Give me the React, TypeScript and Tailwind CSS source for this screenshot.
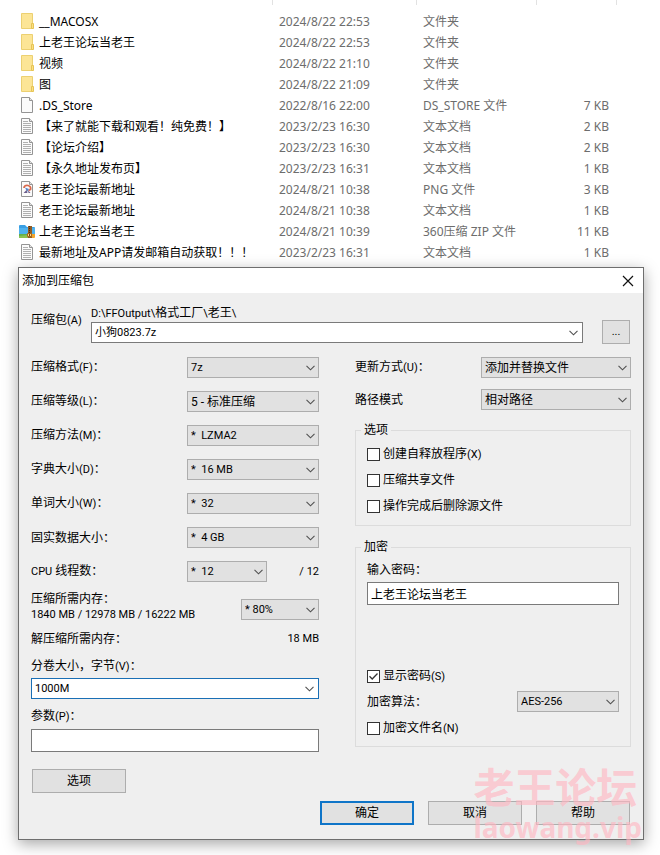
import { useState } from "react";
import type { ReactNode } from "react";
import clsx from "clsx";

type FileKind = "folder" | "blank" | "text" | "image" | "zip";

interface FileEntry {
    kind: FileKind;
    name: string;
    date: string;
    type: string;
    size?: string;
}

const files: FileEntry[] = [
    { kind: "folder", name: "__MACOSX", date: "2024/8/22 22:53", type: "文件夹" },
    { kind: "folder", name: "上老王论坛当老王", date: "2024/8/22 22:53", type: "文件夹" },
    { kind: "folder", name: "视频", date: "2024/8/22 21:10", type: "文件夹" },
    { kind: "folder", name: "图", date: "2024/8/22 21:09", type: "文件夹" },
    { kind: "blank", name: ".DS_Store", date: "2022/8/16 22:00", type: "DS_STORE 文件", size: "7 KB" },
    { kind: "text", name: "【来了就能下载和观看！纯免费！】", date: "2023/2/23 16:30", type: "文本文档", size: "2 KB" },
    { kind: "text", name: "【论坛介绍】", date: "2023/2/23 16:30", type: "文本文档", size: "2 KB" },
    { kind: "text", name: "【永久地址发布页】", date: "2023/2/23 16:31", type: "文本文档", size: "1 KB" },
    { kind: "image", name: "老王论坛最新地址", date: "2024/8/21 10:38", type: "PNG 文件", size: "3 KB" },
    { kind: "text", name: "老王论坛最新地址", date: "2024/8/21 10:38", type: "文本文档", size: "1 KB" },
    { kind: "zip", name: "上老王论坛当老王", date: "2024/8/21 10:39", type: "360压缩 ZIP 文件", size: "11 KB" },
    { kind: "text", name: "最新地址及APP请发邮箱自动获取！！！", date: "2023/2/23 16:31", type: "文本文档", size: "1 KB" },
];

const compression = [
    { id: "format", label: "压缩格式", hotkey: "F", value: "7z" },
    { id: "level", label: "压缩等级", hotkey: "L", value: "5 - 标准压缩", cjk: true },
    { id: "method", label: "压缩方法", hotkey: "M", value: "*\u00a0 LZMA2" },
    { id: "dictionary", label: "字典大小", hotkey: "D", value: "*\u00a0 16 MB" },
    { id: "word", label: "单词大小", hotkey: "W", value: "*\u00a0 32" },
    { id: "solid", label: "固实数据大小", value: "*\u00a0 4 GB" },
];

const FileIcon = ({ kind }: { kind: FileKind }) => {
    if (kind === "folder") {
        return (
            <svg className="h-[18px] w-4 shrink-0" viewBox="0 1 16 18" aria-hidden="true">
                <path d="M2.5 1.5h11v15h-11z" fill="#fce596" stroke="#ecd071" />
                <path d="M12.5 11.5h2v5h-2z" fill="#fbdf83" stroke="#e6c455" />
            </svg>
        );
    }
    if (kind === "zip") {
        return (
            <svg className="h-[18px] w-4 shrink-0" viewBox="0 1 16 18" aria-hidden="true">
                <path d="M0 4q0-1 1-1h5l2 2h7q1 0 1 1v8H0z" fill="#3a9fe3" />
                <path d="M0 6h16v6H0z" fill="#4eb2ef" />
                <path d="M0 12h9v4H1q-1 0-1-1z" fill="#63b04a" />
                <path d="M0 14l9-1v3H1q-1 0-1-1z" fill="#8cc152" />
                <path d="M12 12h4v3q0 1-1 1h-3z" fill="#f0a52e" />
                <path d="M9 4h4v12H9z" fill="#8f5a24" />
                <path d="M10.500 4v7" stroke="#4c2c0e" strokeDasharray="1 1" />
                <path d="M8.500 11.500h4v3h-4z" fill="#fbe08a" stroke="#a8641c" />
                <path d="M10 12h1v2h-1z" fill="#7a3d0c" />
            </svg>
        );
    }
    return (
        <svg className="h-[18px] w-4 shrink-0" viewBox="0 1 16 18" aria-hidden="true">
            <path d="M2.500 1.500h8l3 3v12h-11z" fill="#fbfbfb" stroke="#949494" />
            <path d="M10.500 1.500v3h3" fill="#e4e4e4" stroke="#949494" />
            {kind === "text" && <path d="M4 4.500h5M4 6.500h8M4 8.500h8M4 10.500h8M4 12.500h8M4 14.500h8" stroke="#b0b0b0" />}
            {kind === "image" && (
                <>
                    <path d="M5 8c0-2 2-3 4-2.500s3 2 2.500 4l-2 1" fill="none" stroke="#d8694c" strokeWidth="1.800" />
                    <path d="M6 7.500l4 1.500-2 3z" fill="#5b86c8" />
                    <path d="M4.500 13l3-3 1 3zM9 10l2.500 3h-2z" fill="#6d5f8c" />
                </>
            )}
        </svg>
    );
};

const Chevron = ({ className }: { className?: string }) => (
    <svg className={clsx("h-1.5 w-[9px]", className)} viewBox="0 0 9 6" aria-hidden="true">
        <path d="M.5.8l4 4 4-4" fill="none" stroke="#505050" strokeWidth="1.100" />
    </svg>
);

// "(F)" style accelerator, set a little smaller than the Chinese text before it
const Hotkey = ({ children }: { children: ReactNode }) => <span className="text-[11px]">({children})</span>;

interface SelectProps {
    id: string;
    value: string;
    className?: string;
    cjk?: boolean;
}

const Select = ({ id, value, className, cjk }: SelectProps) => (
    <div className={clsx("grid h-[21px] shrink-0 items-center", className)}>
        <select
            id={id}
            defaultValue={value}
            className={clsx(
                "col-start-1 row-start-1 h-full w-full appearance-none border border-[#adadad] bg-[#e1e1e1] pl-[3px] outline-none",
                cjk ? "text-xs" : "text-[11px]"
            )}
        >
            <option>{value}</option>
        </select>
        <Chevron className="pointer-events-none col-start-1 row-start-1 mr-1 justify-self-end" />
    </div>
);

const PushButton = ({ children, primary, className }: { children: ReactNode; primary?: boolean; className?: string }) => (
    <button
        type="button"
        className={clsx(
            "h-6 bg-[#e1e1e1]",
            primary ? "border-2 border-[#0f75c8]" : "border border-[#adadad]",
            className ?? "w-[94px]"
        )}
    >
        {children}
    </button>
);

const CheckBox = ({ children, defaultChecked }: { children: ReactNode; defaultChecked?: boolean }) => {
    const [checked, setChecked] = useState(!!defaultChecked);

    return (
        <label className="flex h-4 items-center gap-[3px]">
            <span className="grid size-[13px] place-items-center">
                <input
                    type="checkbox"
                    checked={checked}
                    onChange={(e) => setChecked(e.target.checked)}
                    className="col-start-1 row-start-1 size-[13px] appearance-none border border-[#333] bg-white"
                />
                {checked && (
                    <svg className="pointer-events-none col-start-1 row-start-1 size-[11px]" viewBox="0 0 11 11" aria-hidden="true">
                        <path d="M1.500 5.300l2.700 2.700 5.300-5.500" fill="none" stroke="#333" strokeWidth="1.300" />
                    </svg>
                )}
            </span>
            <span>{children}</span>
        </label>
    );
};

const FileList = () => (
    <table className="w-full table-fixed border-collapse font-['Noto_Sans','Noto_Sans_CJK_SC',sans-serif] text-xs text-[#6d6d6d]">
        <colgroup>
            <col className="w-[273px]" />
            <col className="w-36" />
            <col className="w-[120px]" />
            <col className="w-20" />
            <col />
        </colgroup>
        <thead>
            <tr>
                {["name", "date", "type", "size"].map((column) => (
                    <th key={column} className="p-0">
                        <div className="mb-1.5 h-[5px] border-r border-[#e2e2e2]" />
                    </th>
                ))}
                <th className="p-0" />
            </tr>
        </thead>
        <tbody>
            {files.map((file, index) => (
                <tr key={index} className="h-[21px] leading-[21px] whitespace-nowrap">
                    <td className="p-0 pl-[19px] text-black">
                        <div className="flex h-[21px] items-center gap-1">
                            <FileIcon kind={file.kind} />
                            {file.name}
                        </div>
                    </td>
                    <td className="p-0 pl-1.5">{file.date}</td>
                    <td className="p-0 pl-1.5">{file.type}</td>
                    <td className="p-0 pr-2 text-right">{file.size}</td>
                    <td className="p-0" />
                </tr>
            ))}
        </tbody>
    </table>
);

const CompressionColumn = () => (
    <div>
        <div className="flex flex-col gap-[13px]">
            {compression.map((row) => (
                <div key={row.id} className="flex items-center justify-between">
                    <label htmlFor={row.id}>
                        {row.label}
                        {row.hotkey && <Hotkey>{row.hotkey}</Hotkey>}：
                    </label>
                    <Select id={row.id} value={row.value} cjk={row.cjk} className="w-[132px]" />
                </div>
            ))}
            <div className="flex items-center">
                <label htmlFor="threads" className="w-[156px]">
                    <span className="text-[11px]">CPU</span> 线程数：
                </label>
                <Select id="threads" value={"*\u00a0 12"} className="w-20" />
                <span className="grow text-right text-[11px]">/ 12</span>
            </div>
        </div>

        <div className="mt-2.5 flex items-end justify-between">
            <label htmlFor="memory" className="leading-[15px]">
                压缩所需内存：
                <span className="block text-[11px]">1840 MB / 12978 MB / 16222 MB</span>
            </label>
            <Select id="memory" value="* 80%" className="mb-0.5 w-[78px]" />
        </div>
        <div className="mt-[9px] flex h-4 justify-between">
            <span>解压缩所需内存：</span>
            <span className="text-[11px]">18 MB</span>
        </div>

        <label htmlFor="volume" className="mt-[11px] block h-4">
            分卷大小，字节<Hotkey>V</Hotkey>：
        </label>
        <div className="mt-1 flex h-[21px] border border-[#1a6fb5] bg-white">
            <input id="volume" defaultValue="1000M" className="min-w-0 grow pl-[3px] text-[11px] outline-none" />
            <button type="button" aria-label="分卷大小列表" className="pr-1">
                <Chevron />
            </button>
        </div>

        <label htmlFor="params" className="mt-[9px] block h-4">
            参数<Hotkey>P</Hotkey>：
        </label>
        <input id="params" className="mt-[5px] block h-[23px] w-full border border-[#7a7a7a] bg-white px-[3px] outline-none" />

        <PushButton className="mt-[17px] ml-px block w-[94px]">选项</PushButton>
    </div>
);

const OptionsColumn = () => (
    <div>
        <div className="flex items-center justify-between">
            <label htmlFor="update">
                更新方式<Hotkey>U</Hotkey>：
            </label>
            <Select id="update" value="添加并替换文件" cjk className="w-[150px]" />
        </div>
        <div className="mt-[11px] flex items-center justify-between">
            <label htmlFor="path-mode">路径模式</label>
            <Select id="path-mode" value="相对路径" cjk className="w-[150px]" />
        </div>

        <fieldset className="mt-3 border border-[#dcdcdc] px-[11px] pb-[11px]">
            <legend className="-ml-1.5 px-[3px]">选项</legend>
            <div className="flex flex-col gap-2.5 pt-2">
                <CheckBox>
                    创建自释放程序<Hotkey>X</Hotkey>
                </CheckBox>
                <CheckBox>压缩共享文件</CheckBox>
                <CheckBox>操作完成后删除源文件</CheckBox>
            </div>
        </fieldset>

        <fieldset className="mt-[13px] border border-[#dcdcdc] px-[11px] pb-2.5">
            <legend className="-ml-1.5 px-[3px]">加密</legend>
            <label htmlFor="password" className="block pt-[7px]">
                输入密码：
            </label>
            <input
                id="password"
                defaultValue="上老王论坛当老王"
                className="mt-1 mb-[63px] block h-[23px] w-full border border-[#7a7a7a] bg-white px-[3px] outline-none"
            />
            <CheckBox defaultChecked>
                显示密码<Hotkey>S</Hotkey>
            </CheckBox>
            <div className="mt-[7px] mb-2 flex items-center justify-between">
                <label htmlFor="cipher">加密算法：</label>
                <Select id="cipher" value="AES-256" className="w-[102px]" />
            </div>
            <CheckBox>
                加密文件名<Hotkey>N</Hotkey>
            </CheckBox>
        </fieldset>
    </div>
);

const ArchiveDialog = () => (
    <section
        role="dialog"
        aria-labelledby="dialog-title"
        className="mt-1 mr-4 ml-[18px] border border-[#6e6e6e] bg-[#efefef] font-[Roboto,'Noto_Sans_CJK_SC',sans-serif] text-xs leading-4 text-black shadow-[0_4px_14px_rgba(0,0,0,0.35)]"
    >
        <header className="flex h-[25px] items-center justify-between bg-white pr-[9px] pl-[3px]">
            <h1 id="dialog-title">添加到压缩包</h1>
            <button type="button" aria-label="关闭">
                <svg className="size-3" viewBox="0 0 12 12" aria-hidden="true">
                    <path d="M1 1l10 10M11 1L1 11" fill="none" stroke="#111" strokeWidth="1.200" />
                </svg>
            </button>
        </header>

        <form className="px-3 pt-3 pb-3.5">
            <div className="flex items-end">
                <label htmlFor="archive" className="w-[60px] shrink-0 self-center pb-2">
                    压缩包<Hotkey>A</Hotkey>
                </label>
                <div className="mb-px min-w-0 grow">
                    <p className="h-[17px]">
                        <span className="text-[11px]">D:\FFOutput\</span>格式工厂<span className="text-[11px]">\</span>老王
                        <span className="text-[11px]">\</span>
                    </p>
                    <div className="flex h-[21px] border border-[#7a7a7a] bg-white">
                        <input id="archive" defaultValue="小狗0823.7z" className="min-w-0 grow pl-[3px] text-[11px] outline-none" />
                        <button type="button" aria-label="压缩包列表" className="pr-1">
                            <Chevron />
                        </button>
                    </div>
                </div>
                <PushButton className="mr-px ml-[19px] w-7 text-[11px]">...</PushButton>
            </div>

            <div className="mt-[13px] grid grid-cols-[288fr_276fr] gap-9">
                <CompressionColumn />
                <OptionsColumn />
            </div>

            <footer className="mt-2 mr-px flex justify-end gap-3.5">
                <PushButton primary>确定</PushButton>
                <PushButton>取消</PushButton>
                <PushButton>帮助</PushButton>
            </footer>
        </form>
    </section>
);

const Watermark = () => (
    <div className="pointer-events-none absolute right-[18px] bottom-2 font-['Noto_Sans','Noto_Sans_CJK_SC',sans-serif] font-bold text-[#ffb6c1]/65">
        <p className="text-[41px] leading-[40px]">老王论坛</p>
        <p className="text-[28px] leading-[40px]">laowang.vip</p>
    </div>
);

export default function App() {
    return (
        <main className="relative bg-white pb-[15px]">
            <FileList />
            <ArchiveDialog />
            <Watermark />
        </main>
    );
}
